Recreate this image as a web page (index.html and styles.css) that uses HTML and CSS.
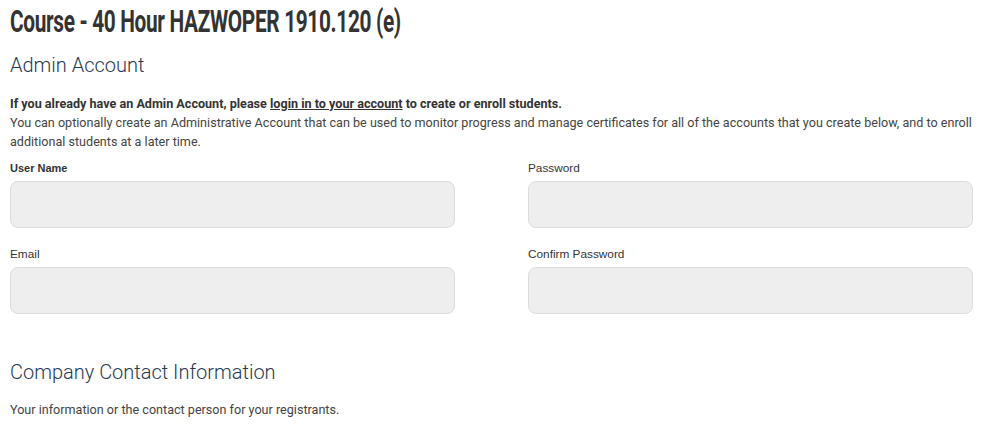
FILE: index.html
```html
<!DOCTYPE html>
<html>
<head>
<meta charset="utf-8">
<link rel="stylesheet" href="styles.css">
</head>
<body>
<div class="page">
  <h1 class="title"><span class="title-text">Course - 40 Hour HAZWOPER 1910.120 (e)</span></h1>
  <h2 class="section">Admin Account</h2>
  <p class="intro">
    <strong>If you already have an Admin Account, please <a href="#">login in to your account</a> to create or enroll students.</strong><br>
    You can optionally create an Administrative Account that can be used to monitor progress and manage certificates for all of the accounts that you create below, and to enroll additional students at a later time.
  </p>
  <div class="form-grid">
    <div class="field">
      <label class="label label-strong">User Name</label>
      <input class="input" type="text">
    </div>
    <div class="field">
      <label class="label">Password</label>
      <input class="input" type="password">
    </div>
    <div class="field">
      <label class="label">Email</label>
      <input class="input" type="text">
    </div>
    <div class="field">
      <label class="label">Confirm Password</label>
      <input class="input" type="password">
    </div>
  </div>
  <h2 class="section section-company">Company Contact Information</h2>
  <p class="note">Your information or the contact person for your registrants.</p>
</div>
</body>
</html>
```
FILE: styles.css
```css
html, body {
  margin: 0;
  padding: 0;
  background: #fff;
}
.page {
  padding: 3px 10px 0 10px;
  font-family: Roboto, "Liberation Sans", sans-serif;
  color: #444;
}
.title {
  margin: 0;
  font-family: Roboto, "Liberation Sans", sans-serif;
  font-weight: 700;
  font-size: 32px;
  line-height: 36px;
  letter-spacing: -0.5px;
  color: #333;
  white-space: nowrap;
}
.title-text {
  display: inline-block;
  transform: scaleX(0.65);
  transform-origin: left center;
}
.section {
  margin: 13px 0 0 0;
  font-family: Roboto, sans-serif;
  font-weight: 300;
  font-size: 20px;
  line-height: 26px;
  color: #1f3a52;
}
.intro {
  margin: 16px 0 0 0;
  font-size: 12.6px;
  line-height: 19px;
  color: #444;
}
.intro strong {
  color: #333;
}
.intro a {
  color: #333;
  text-decoration: underline;
}
.form-grid {
  display: grid;
  grid-template-columns: 445px 445px;
  column-gap: 73px;
  row-gap: 19px;
  margin-top: 10px;
}
.field {
  display: flex;
  flex-direction: column;
}
.label {
  font-family: "Liberation Sans", Arial, sans-serif;
  font-size: 11.8px;
  line-height: 14px;
  color: #333;
  margin-bottom: 6px;
}
.label-strong {
  font-weight: bold;
  font-size: 11px;
}
.input {
  box-sizing: border-box;
  height: 47px;
  width: 100%;
  margin: 0;
  border: 1px solid #dcdcdc;
  border-radius: 8px;
  background: #eeeeee;
}
.section-company {
  margin-top: 45px;
}
.note {
  margin: 15px 0 0 0;
  font-size: 12.6px;
  line-height: 19px;
  color: #444;
}
```
